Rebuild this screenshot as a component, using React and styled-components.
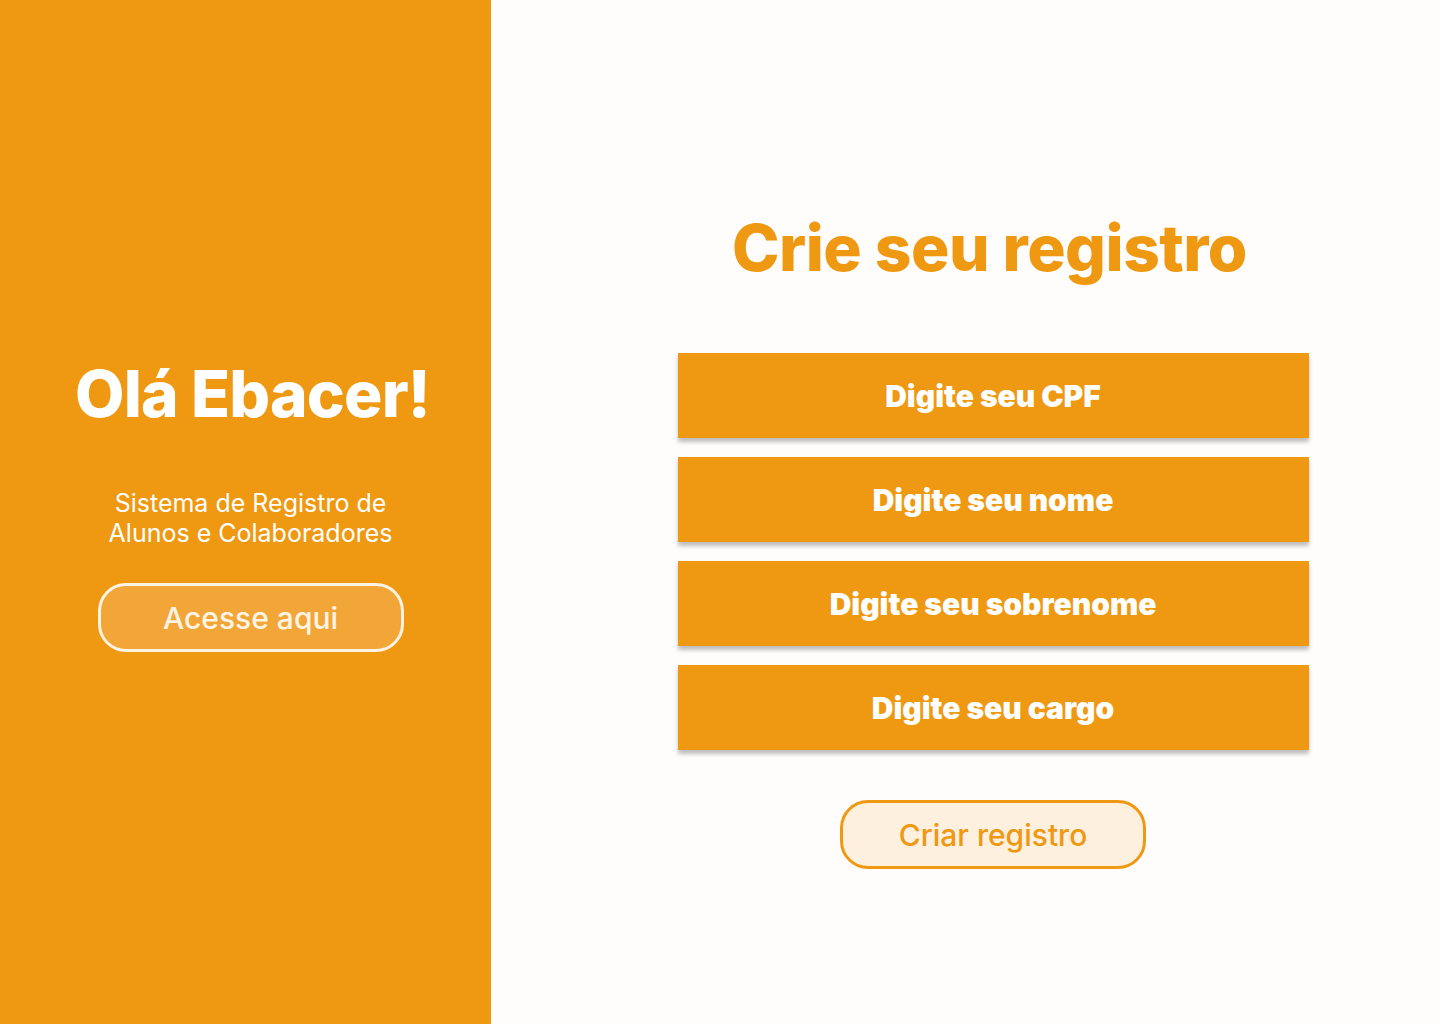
import styled, { createGlobalStyle } from 'styled-components';

const GlobalStyle = createGlobalStyle`
  * {
    box-sizing: border-box;
  }

  body {
    margin: 0;
    font-family: Inter, 'Noto Sans', sans-serif;
    background: #fffdfb;
  }
`;

const Page = styled.div`
  display: grid;
  grid-template-columns: 491px 1fr;
  min-height: 1024px;
`;

const Sidebar = styled.aside`
  background: #ef9811;
  display: flex;
  flex-direction: column;
  align-items: center;
  padding: 355px 0 0 10px;
  color: #ffffff;
`;

const Greeting = styled.h1`
  margin: 0 0 0 4px;
  font-size: 64px;
  font-weight: 800;
  letter-spacing: -0.8px;
  line-height: 77px;
`;

const Subtitle = styled.p`
  margin: 56px 0 0;
  font-size: 25px;
  line-height: 30px;
  text-align: center;
  font-weight: 400;
`;

const PillButton = styled.button`
  width: 306px;
  height: 69px;
  border-radius: 28px;
  font-family: Inter, sans-serif;
  font-size: 30px;
  font-weight: 500;
  cursor: pointer;
  border: 3px solid ${(p) => (p.$light ? '#fff4e4' : '#ef9811')};
  background: ${(p) => (p.$light ? '#f2a638' : '#fdf0df')};
  color: ${(p) => (p.$light ? '#fff4e4' : '#ef9811')};
`;

const AccessButton = styled(PillButton)`
  margin-top: 35px;
`;

const Main = styled.main`
  display: flex;
  flex-direction: column;
  align-items: center;
  padding: 209px 0 0 55px;
`;

const Title = styled.h2`
  margin: 0 7px 0 0;
  font-size: 64px;
  font-weight: 800;
  letter-spacing: -0.5px;
  line-height: 77px;
  color: #ef9811;
`;

const Form = styled.form`
  display: flex;
  flex-direction: column;
  align-items: center;
  gap: 19px;
  margin-top: 67px;
`;

const Field = styled.input`
  width: 631px;
  height: 85px;
  border: none;
  outline: none;
  background: #ef9811;
  box-shadow: 0 4px 4px rgba(0, 0, 0, 0.25);
  font-family: Inter, sans-serif;
  font-size: 30px;
  font-weight: 900;
  text-align: center;
  color: #ffffff;
  padding-top: 2px;

  &::placeholder {
    color: #ffffff;
    opacity: 1;
  }
`;

const SubmitButton = styled(PillButton)`
  margin-top: 31px;
`;

const fields = [
  'Digite seu CPF',
  'Digite seu nome',
  'Digite seu sobrenome',
  'Digite seu cargo',
];

const App = () => {
  return (
    <>
      <GlobalStyle />
      <Page>
        <Sidebar>
          <Greeting>Olá Ebacer!</Greeting>
          <Subtitle>
            Sistema de Registro de
            <br />
            Alunos e Colaboradores
          </Subtitle>
          <AccessButton type="button" $light>
            Acesse aqui
          </AccessButton>
        </Sidebar>

        <Main>
          <Title>Crie seu registro</Title>
          <Form onSubmit={(e) => e.preventDefault()}>
            {fields.map((label) => (
              <Field key={label} type="text" placeholder={label} />
            ))}
            <SubmitButton type="submit">Criar registro</SubmitButton>
          </Form>
        </Main>
      </Page>
    </>
  );
};

export default App;
